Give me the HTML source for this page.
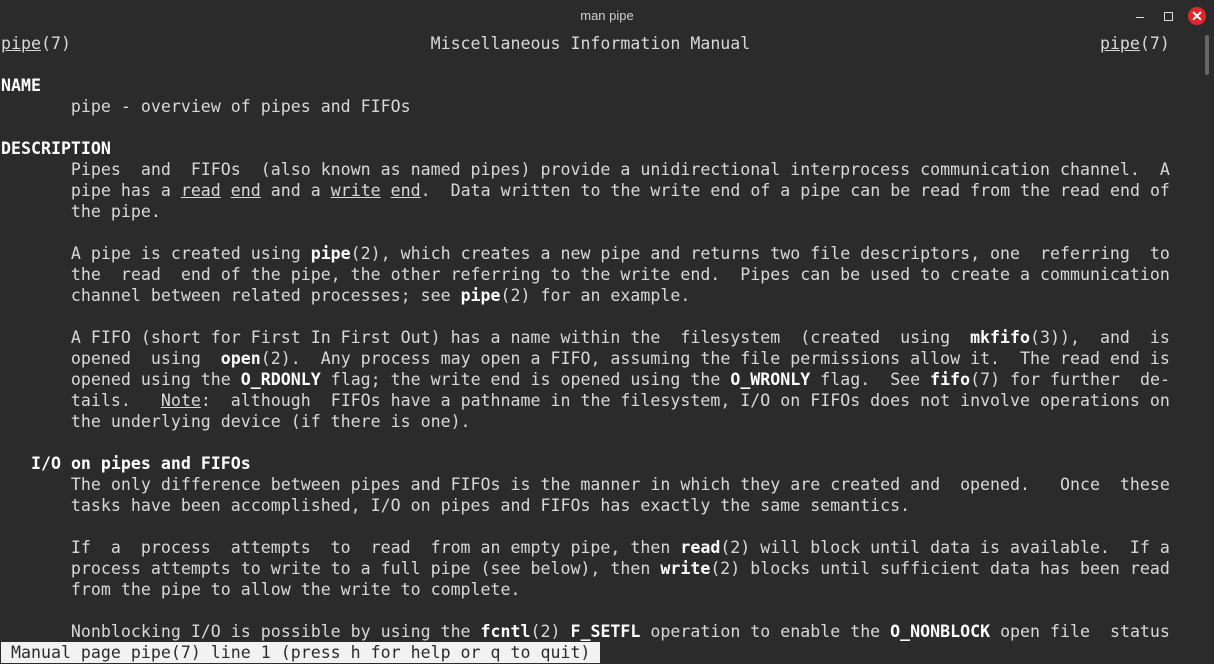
<!DOCTYPE html>
<html><head><meta charset="utf-8"><style>
body{margin:0;width:1214px;height:664px;background:#2b2b2b;overflow:hidden;position:relative}
.t{position:absolute;top:0;left:0;width:1214px;height:32px;text-align:center;font:13px "Liberation Sans",sans-serif;color:#cfcfcf;line-height:32px}
pre{position:absolute;left:1px;top:33px;margin:0;font-family:"DejaVu Sans Mono","Liberation Mono",monospace;font-size:16.6px;line-height:21px;color:#d8d8d8}
b{color:#fff}
u{text-decoration:underline}
.sb{position:absolute;left:1px;top:642px;height:21px;width:599px;background:#f2f2f2}
.st{position:absolute;left:1px;top:642px;margin:0;font-family:"DejaVu Sans Mono","Liberation Mono",monospace;font-size:16.6px;line-height:21px;color:#2b2b2b;white-space:pre}
.scr{position:absolute;left:1205px;top:35px;width:4px;height:40px;background:#666;border-radius:2px}
</style></head><body>
<div class="t">man pipe</div>
<div style="position:absolute;left:1136px;top:17px;width:8px;height:1px;background:#ddd"></div>
<div style="position:absolute;left:1164px;top:12px;width:7px;height:7px;border:1px solid #ddd"></div>
<div style="position:absolute;left:1188px;top:7px;width:18px;height:18px;border-radius:50%;background:#e0262b;color:#fff;font:bold 14px 'Liberation Sans',sans-serif;text-align:center;line-height:18px">✕</div>
<div class="scr"></div>
<pre><u>pipe</u>(7)                                    Miscellaneous Information Manual                                   <u>pipe</u>(7)

<b>NAME</b>
       pipe - overview of pipes and FIFOs

<b>DESCRIPTION</b>
       Pipes  and  FIFOs  (also known as named pipes) provide a unidirectional interprocess communication channel.  A
       pipe has a <u>read</u> <u>end</u> and a <u>write</u> <u>end</u>.  Data written to the write end of a pipe can be read from the read end of
       the pipe.

       A pipe is created using <b>pipe</b>(2), which creates a new pipe and returns two file descriptors, one  referring  to
       the  read  end of the pipe, the other referring to the write end.  Pipes can be used to create a communication
       channel between related processes; see <b>pipe</b>(2) for an example.

       A FIFO (short for First In First Out) has a name within the  filesystem  (created  using  <b>mkfifo</b>(3)),  and  is
       opened  using  <b>open</b>(2).  Any process may open a FIFO, assuming the file permissions allow it.  The read end is
       opened using the <b>O_RDONLY</b> flag; the write end is opened using the <b>O_WRONLY</b> flag.  See <b>fifo</b>(7) for further  de‐
       tails.   <u>Note</u>:  although  FIFOs have a pathname in the filesystem, I/O on FIFOs does not involve operations on
       the underlying device (if there is one).

   <b>I/O on pipes and FIFOs</b>
       The only difference between pipes and FIFOs is the manner in which they are created and  opened.   Once  these
       tasks have been accomplished, I/O on pipes and FIFOs has exactly the same semantics.

       If  a  process  attempts  to  read  from an empty pipe, then <b>read</b>(2) will block until data is available.  If a
       process attempts to write to a full pipe (see below), then <b>write</b>(2) blocks until sufficient data has been read
       from the pipe to allow the write to complete.

       Nonblocking I/O is possible by using the <b>fcntl</b>(2) <b>F_SETFL</b> operation to enable the <b>O_NONBLOCK</b> open file  status</pre>
<div class="sb"></div>
<div class="st"> Manual page pipe(7) line 1 (press h for help or q to quit)</div>
</body></html>
